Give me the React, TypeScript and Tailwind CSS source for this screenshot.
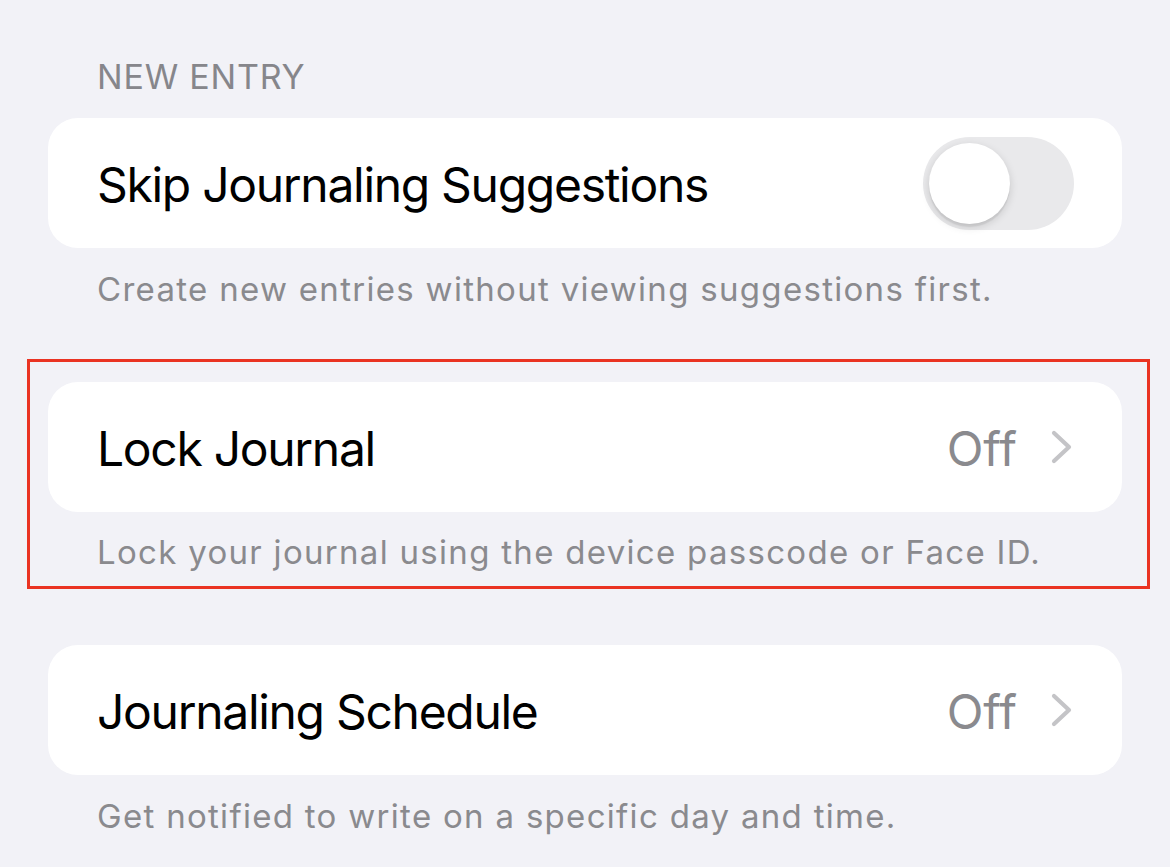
import React from "react";

const font = { fontFamily: "Inter, 'Noto Sans', sans-serif" };

function Chevron() {
  return (
    <svg width="22" height="34" viewBox="0 0 22 34" className="block">
      <path d="M3 3 L18 17 L3 31" fill="none" stroke="#c4c4c7" strokeWidth="4.2" strokeLinecap="round" strokeLinejoin="round" />
    </svg>
  );
}

function Toggle() {
  return (
    <div className="w-[151px] h-[93px] rounded-full bg-[#e9e9eb] p-[6px] flex items-center">
      <div className="w-[81px] h-[81px] rounded-full bg-white shadow-[0_3px_8px_rgba(0,0,0,0.15),0_3px_1px_rgba(0,0,0,0.06)]" />
    </div>
  );
}

function Footer({ children }: { children: React.ReactNode }) {
  return (
    <div className="px-[49px] h-[44px] leading-[44px] text-[33px] text-[#8a8a8e] tracking-[1.3px] whitespace-nowrap">
      {children}
    </div>
  );
}

function NavRow({ title }: { title: string }) {
  return (
    <div className="h-[130px] rounded-[30px] bg-white flex items-center pl-[49px] pr-[49px]">
      <div className="flex-1 text-[48px] text-black tracking-[-1.3px] pt-[3px]">{title}</div>
      <div className="text-[48px] text-[#8a8a8e] mr-[34px] pt-[3px]">Off</div>
      <Chevron />
    </div>
  );
}

export default function App() {
  return (
    <div className="w-[1170px] h-[867px] bg-[#f2f2f7] overflow-hidden px-[48px] pt-[55px]" style={font}>
      <div className="px-[49px] h-[44px] leading-[44px] text-[34px] text-[#86868b] tracking-[0.8px]">NEW ENTRY</div>
      <div className="mt-[19px] h-[130px] rounded-[30px] bg-white flex items-center pl-[49px] pr-[48px]">
        <div className="flex-1 text-[48px] text-black tracking-[-1.3px] pt-[3px]">Skip Journaling Suggestions</div>
        <Toggle />
      </div>
      <div className="mt-[19px]">
        <Footer>Create new entries without viewing suggestions first.</Footer>
      </div>
      <div className="relative mt-[71px]">
        <NavRow title="Lock Journal" />
        <div className="mt-[18px]">
          <Footer>Lock your journal using the device passcode or Face ID.</Footer>
        </div>
        <div className="absolute top-[-23px] bottom-[-15px] left-[-21px] right-[-28px] border-[3px] border-[#ea3322] pointer-events-none" />
      </div>
      <div className="mt-[71px]">
        <NavRow title="Journaling Schedule" />
      </div>
      <div className="mt-[19px]">
        <Footer>Get notified to write on a specific day and time.</Footer>
      </div>
    </div>
  );
}
